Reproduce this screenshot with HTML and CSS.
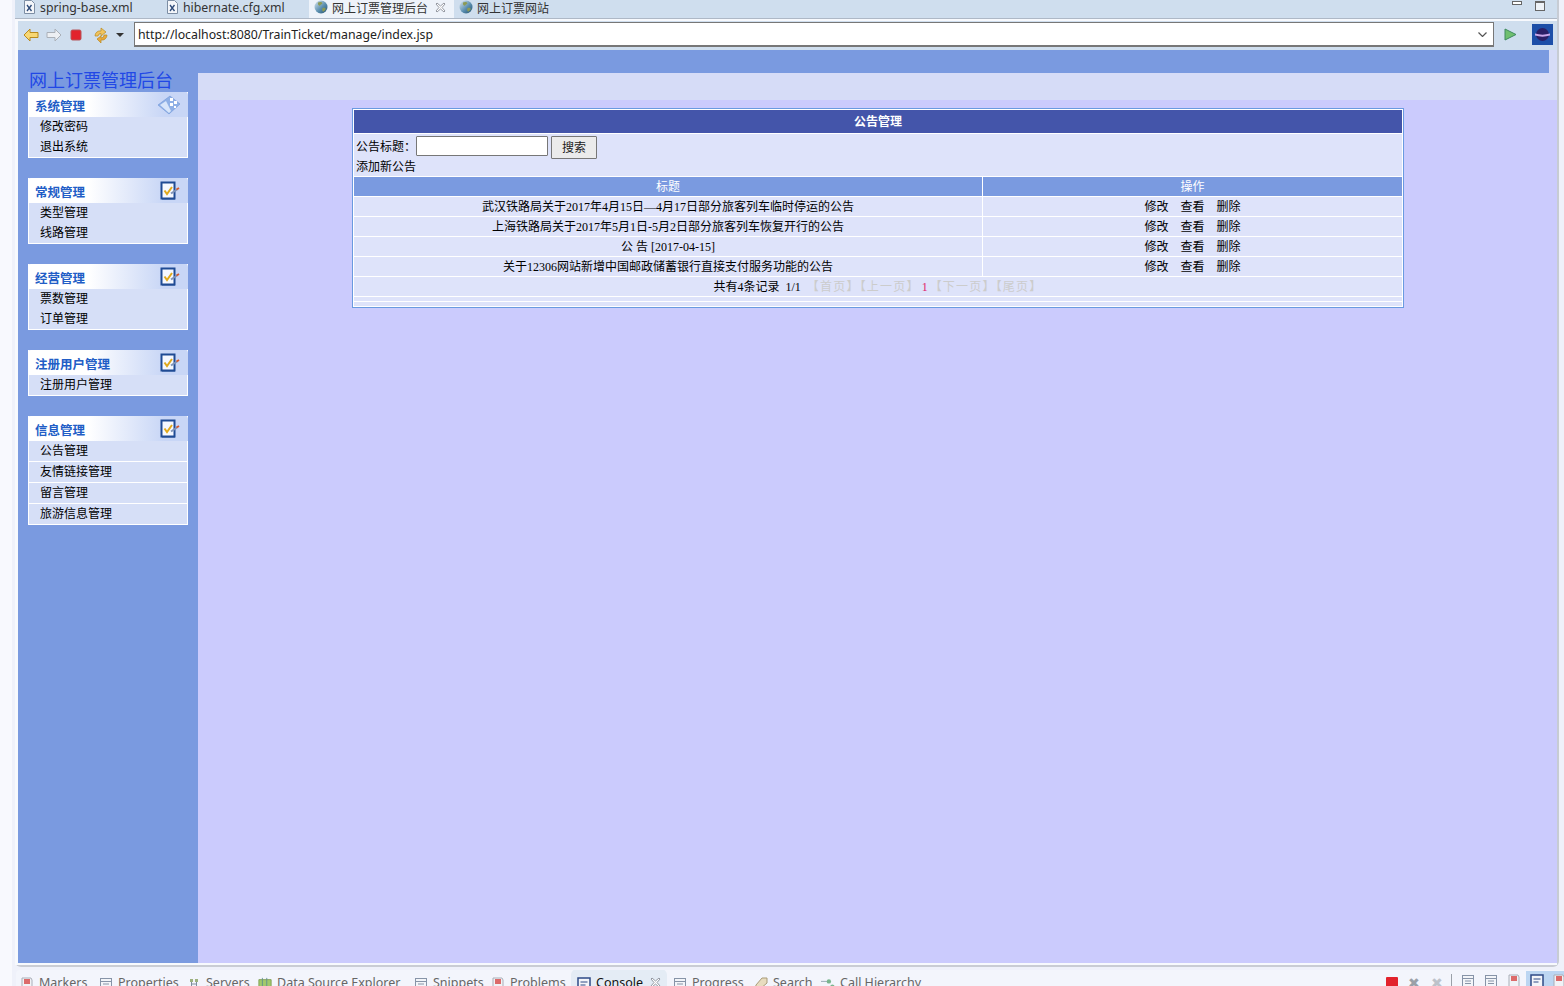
FILE: index.html
```html
<!DOCTYPE html>
<html lang="zh-CN">
<head>
<meta charset="utf-8">
<title>网上订票管理后台</title>
<link rel="stylesheet" href="styles.css">
</head>
<body>
<svg class="defs" width="0" height="0" aria-hidden="true">
  <defs>
    <linearGradient id="g-globe" x1="0" y1="0" x2="1" y2="1"><stop offset="0" stop-color="#dfeaf2"/><stop offset=".55" stop-color="#5b8fb0"/><stop offset="1" stop-color="#22506e"/></linearGradient>
    <symbol id="i-globe" viewBox="0 0 14 14"><circle cx="7" cy="7" r="6.5" fill="url(#g-globe)"/><path d="M4 2.500c2-1 4-.5 4.500.8-.8 1.500-2 1-2.500 2.500-1.500 0-2.500-1.500-2-3.300zM8.500 8c1.500-.5 3 0 3.300 1-.6 1.600-1.800 2.500-3 2.600-.8-1-.8-2.400-.3-3.600z" fill="#8c9a55"/></symbol>
    <symbol id="i-xml" viewBox="0 0 11 14"><path d="M.5.500h7l3 3v10H.500z" fill="#f4f6fa" stroke="#7d8ea4"/><path d="M3 5l4.500 6M7.500 5L3 11" stroke="#2d4a78" stroke-width="1.300" fill="none"/></symbol>
    <symbol id="i-close" viewBox="0 0 11 11"><path d="M1 2l1-1 3.500 3L9 1l1 1-3 3.500 3 3.500-1 1-3.500-3L2 10 1 9l3-3.500z" fill="#fff" stroke="#8a8f99" stroke-width=".9"/></symbol>
    <symbol id="i-task" viewBox="0 0 20 20"><rect x="2" y="2.500" width="13" height="16" fill="#1f4b94"/><rect x="1.500" y="1.500" width="13" height="16" fill="#f5f8ff" stroke="#1f4b94" stroke-width="2"/><path d="M4.500 9.500l2.500 3.500L12 6" fill="none" stroke="#e0a91c" stroke-width="2"/><path d="M11 12.500l6-4" stroke="#7f93b8" stroke-width="2"/><path d="M16.500 8.500l2.500-1.500" stroke="#d3582d" stroke-width="2"/></symbol>
    <symbol id="i-cube" viewBox="0 0 24 20"><path d="M1 10L13 1l10 8-11 10z" fill="#8fb0e6" stroke="#6f95d6" stroke-width=".6"/><path d="M3 10l6-4 5 10-2 2z" fill="#d7e5fa"/><path d="M13 3h3v3h-3zM17 6h3v3h-3zM13 8h3v3h-3zM17 11h2v2h-2z" fill="#fff"/></symbol>
    <symbol id="i-doc" viewBox="0 0 14 14"><rect x="1.500" y="1.500" width="11" height="11" fill="#f3f5f9" stroke="#8794a8"/><path d="M1.500 4.500h11M4 7h6M4 9.500h6" stroke="#8794a8"/></symbol>
    <symbol id="i-console" viewBox="0 0 14 14"><rect x="1" y="1" width="12" height="12" fill="#f3f5f9" stroke="#2e4a86" stroke-width="1.500"/><path d="M3.500 5h7M3.500 8h5" stroke="#2e4a86"/></symbol>
    <symbol id="i-flag" viewBox="0 0 14 14"><path d="M2 1h9l1 2v10H2z" fill="#f1f2f6" stroke="#a9aeb8"/><path d="M4 2h6v5H4z" fill="#dc6a6a"/></symbol>
    <symbol id="i-node" viewBox="0 0 14 14"><path d="M3 2h3v3H3zM8 2h3v3H8zM3 9h3v3H3zM8 9h3v3H8z" fill="#9db17f"/><path d="M4.500 5v4M9.500 5v4M4.500 7h5" stroke="#7e8d9e"/></symbol>
    <symbol id="i-map" viewBox="0 0 16 14"><path d="M1 2h14v11H1z" fill="#a3c96c" stroke="#7d9b4f"/><path d="M5 0v13M10 0v13" stroke="#5f8f8f"/></symbol>
    <symbol id="i-tag" viewBox="0 0 14 14"><path d="M1 13l1-5 6-7h5v5l-7 6z" fill="#e8dcbf" stroke="#a99b79"/></symbol>
    <symbol id="i-flow" viewBox="0 0 16 14"><path d="M0 4h9M4 10h9" stroke="#8ea0ad"/><circle cx="9" cy="4" r="2.500" fill="#79b58e"/><circle cx="13" cy="10" r="2.500" fill="#79b58e"/></symbol>
  </defs>
</svg>

<div class="app">
  <div class="rail"></div>
  <div class="workbench">
    <section class="editor">
      <div class="editor-tabs">
        <div class="etab etab-a"><svg class="ic-xml"><use href="#i-xml"/></svg><span>spring-base.xml</span></div>
        <div class="etab etab-b"><svg class="ic-xml"><use href="#i-xml"/></svg><span>hibernate.cfg.xml</span></div>
        <div class="etab etab-c is-active"><svg class="ic-globe"><use href="#i-globe"/></svg><span class="cjk">网上订票管理后台</span><svg class="ic-close"><use href="#i-close"/></svg></div>
        <div class="etab etab-d"><svg class="ic-globe"><use href="#i-globe"/></svg><span class="cjk">网上订票网站</span></div>
        <div class="win-buttons"><span class="btn-min"></span><span class="btn-max"></span></div>
      </div>
      <div class="browser">
        <div class="toolbar">
          <svg class="tool tool-back" viewBox="0 0 16 14"><path d="M1 7l6-6v3.500h8v5H7V13z" fill="#f7d774" stroke="#b98a1e"/></svg>
          <svg class="tool tool-fwd" viewBox="0 0 16 14"><path d="M15 7L9 1v3.500H1v5h8V13z" fill="#eceff3" stroke="#aab0b8"/></svg>
          <svg class="tool tool-stop" viewBox="0 0 12 12"><rect x="1" y="1" width="10" height="10" rx="1.500" fill="#e2222c" stroke="#b4545a"/></svg>
          <svg class="tool tool-ref" viewBox="0 0 16 16"><path d="M2 9a5 5 0 0 1 6-5V1l5 4-5 4V6.500A3 3 0 0 0 5 9z" fill="#f0c35e" stroke="#b98a1e" stroke-width=".7"/><path d="M14 8a5 5 0 0 1-6 5v3l-4-4 4-3v2a3 3 0 0 0 3-3z" fill="#e9a83c" stroke="#b98a1e" stroke-width=".7"/></svg>
          <svg class="tool tool-drop" viewBox="0 0 8 4"><path d="M0 0h8L4 4z" fill="#333"/></svg>
          <div class="address">
            <span class="address-text">http://localhost:8080/TrainTicket/manage/index.jsp</span>
            <svg class="address-chev" viewBox="0 0 9 5"><path d="M.500.500L4.500 4.500 8.500.500" fill="none" stroke="#555" stroke-width="1.200"/></svg>
          </div>
          <svg class="tool tool-go" viewBox="0 0 13 13"><path d="M1 1l11 5.500L1 12z" fill="#6fbf6f" stroke="#3e8a5e"/></svg>
          <svg class="tool tool-planet" viewBox="0 0 21 21"><rect width="21" height="21" fill="#1d4fa8"/><circle cx="10.500" cy="10.500" r="6.500" fill="#2b1f66"/><path d="M3 9.500c5 1.500 10 1.500 15 0v2c-5 1.500-10 1.500-15 0z" fill="#c9a7ea"/></svg>
        </div>
        <div class="page">
          <div class="page-band"></div>
          <div class="page-body">
            <aside class="sidebar">
              <h1 class="site-title">网上订票管理后台</h1>
              <div class="menu">
                <div class="menu-head"><span>系统管理</span><svg class="ic-cube"><use href="#i-cube"/></svg></div>
                <div class="menu-item">修改密码</div>
                <div class="menu-item">退出系统</div>
              </div>
              <div class="menu">
                <div class="menu-head"><span>常规管理</span><svg class="ic-task"><use href="#i-task"/></svg></div>
                <div class="menu-item">类型管理</div>
                <div class="menu-item">线路管理</div>
              </div>
              <div class="menu">
                <div class="menu-head"><span>经营管理</span><svg class="ic-task"><use href="#i-task"/></svg></div>
                <div class="menu-item">票数管理</div>
                <div class="menu-item">订单管理</div>
              </div>
              <div class="menu">
                <div class="menu-head"><span>注册用户管理</span><svg class="ic-task"><use href="#i-task"/></svg></div>
                <div class="menu-item">注册用户管理</div>
              </div>
              <div class="menu menu-lined">
                <div class="menu-head"><span>信息管理</span><svg class="ic-task"><use href="#i-task"/></svg></div>
                <div class="menu-item">公告管理</div>
                <div class="menu-item">友情链接管理</div>
                <div class="menu-item">留言管理</div>
                <div class="menu-item">旅游信息管理</div>
              </div>
            </aside>
            <main class="main">
              <div class="main-strip"></div>
              <table class="grid">
                <colgroup><col class="col-title"><col class="col-ops"></colgroup>
                <tr><th colspan="2" class="grid-caption">公告管理</th></tr>
                <tr>
                  <td colspan="2" class="grid-search">
                    <div class="search-line">公告标题：<input class="search-input" type="text"><button class="search-btn" type="button">搜索</button></div>
                    <div class="add-line">添加新公告</div>
                  </td>
                </tr>
                <tr class="grid-head"><td>标题</td><td>操作</td></tr>
                <tr><td>武汉铁路局关于2017年4月15日—4月17日部分旅客列车临时停运的公告</td><td class="ops"><span>修改</span><span>查看</span><span>删除</span></td></tr>
                <tr><td>上海铁路局关于2017年5月1日-5月2日部分旅客列车恢复开行的公告</td><td class="ops"><span>修改</span><span>查看</span><span>删除</span></td></tr>
                <tr><td>公 告 [2017-04-15]</td><td class="ops"><span>修改</span><span>查看</span><span>删除</span></td></tr>
                <tr><td>关于12306网站新增中国邮政储蓄银行直接支付服务功能的公告</td><td class="ops"><span>修改</span><span>查看</span><span>删除</span></td></tr>
                <tr><td colspan="2" class="pager">共有4条记录 &nbsp;1/1 &nbsp;<span class="off">【首页】【上一页】</span> &nbsp;<span class="cur">1</span> &nbsp;<span class="off">【下一页】【尾页】</span></td></tr>
                <tr class="grid-spacer"><td colspan="2"></td></tr>
                <tr class="grid-spacer"><td colspan="2"></td></tr>
              </table>
            </main>
          </div>
        </div>
      </div>
    </section>
    <footer class="views">
      <div class="vtab v1"><svg class="vic"><use href="#i-flag"/></svg>Markers</div>
      <div class="vtab v2"><svg class="vic"><use href="#i-doc"/></svg>Properties</div>
      <div class="vtab v3"><svg class="vic"><use href="#i-node"/></svg>Servers</div>
      <div class="vtab v4"><svg class="vic"><use href="#i-map"/></svg>Data Source Explorer</div>
      <div class="vtab v5"><svg class="vic"><use href="#i-doc"/></svg>Snippets</div>
      <div class="vtab v6"><svg class="vic"><use href="#i-flag"/></svg>Problems</div>
      <div class="vtab v7 is-active"><svg class="vic"><use href="#i-console"/></svg>Console<svg class="ic-close"><use href="#i-close"/></svg></div>
      <div class="vtab v8"><svg class="vic"><use href="#i-doc"/></svg>Progress</div>
      <div class="vtab v9"><svg class="vic"><use href="#i-tag"/></svg>Search</div>
      <div class="vtab v10"><svg class="vic"><use href="#i-flow"/></svg>Call Hierarchy</div>
      <div class="view-tools">
        <span class="vt-stop"></span>
        <span class="vt-x">✖</span>
        <span class="vt-x vt-x2">✖</span>
        <span class="vt-sep"></span>
        <svg class="vic"><use href="#i-doc"/></svg>
        <svg class="vic"><use href="#i-doc"/></svg>
        <svg class="vic"><use href="#i-flag"/></svg>
        <span class="vt-on"><svg class="vic"><use href="#i-console"/></svg></span>
        <span class="vt-on vt-on2"><svg class="vic"><use href="#i-flag"/></svg></span>
      </div>
    </footer>
  </div>
</div>
</body>
</html>
```

FILE: styles.css
```css
* { box-sizing: border-box; }
html, body { margin: 0; padding: 0; }
body {
  width: 1564px;
  height: 986px;
  overflow: hidden;
  background: #f6f7fd;
  font-family: "Liberation Serif", "Noto Sans CJK SC", serif;
  font-size: 12px;
  color: #000;
}
.defs { position: absolute; }
.app { display: flex; width: 1564px; height: 986px; }
.rail { width: 12px; flex: none; background: #f8f9fe; }
.workbench { width: 1552px; flex: none; display: flex; flex-direction: column; background: #eff1fa; }

/* editor */
.editor {
  margin-left: 3px;
  width: 1544px;
  height: 967px;
  flex: none;
  display: flex;
  flex-direction: column;
  background: #fff;
  border-right: 2px solid #c7ccd4;
  border-bottom: 2px solid #c9ccd4;
  border-radius: 0 0 6px 6px;
}
.editor-tabs {
  height: 19px;
  flex: none;
  display: flex;
  align-items: center;
  background: #cfdeee;
  border-bottom: 1px solid #aeb8c6;
  font-family: "Noto Sans", sans-serif;
  font-size: 12.3px;
  color: #333;
  white-space: nowrap;
}
.etab { height: 18px; display: flex; align-items: center; flex: none; padding-bottom: 4px; }
.etab-a { width: 143px; padding-left: 9px; gap: 5px; }
.etab-b { width: 151px; padding-left: 9px; gap: 5px; }
.etab-c { width: 145px; padding-left: 5px; gap: 4px; }
.etab-d { width: 120px; padding-left: 5px; gap: 4px; }
.etab.is-active { background: #eef3fa; }
.cjk { font-family: "Noto Sans CJK SC", sans-serif; font-size: 12px; }
.ic-xml { width: 11px; height: 14px; flex: none; }
.ic-globe { width: 14px; height: 14px; flex: none; }
.ic-close { width: 11px; height: 11px; flex: none; margin-left: 3px; }
.win-buttons { margin-left: auto; display: flex; gap: 13px; padding-right: 12px; align-self: flex-start; padding-top: 1px; }
.btn-min { width: 10px; height: 4px; background: #fff; border: 1px solid #666; }
.btn-max { width: 10px; height: 10px; background: #eef2f7; border: 1px solid #666; border-top-width: 2px; }

.browser { flex: 1; min-height: 0; display: flex; flex-direction: column; padding: 2px 0 2px 3px; background: #f7f9fd; }
.toolbar {
  height: 29px;
  flex: none;
  display: flex;
  align-items: center;
  padding-bottom: 2px;
  background: #cfdeee;
  font-family: "Noto Sans", sans-serif;
}
.tool { flex: none; display: block; }
.tool-back { width: 16px; height: 14px; margin-left: 5px; }
.tool-fwd { width: 16px; height: 14px; margin-left: 7px; }
.tool-stop { width: 12px; height: 12px; margin-left: 8px; }
.tool-ref { width: 16px; height: 16px; margin-left: 11px; }
.tool-drop { width: 8px; height: 4px; margin-left: 7px; }
.address {
  width: 1360px;
  height: 25px;
  margin-left: 10px;
  flex: none;
  display: flex;
  align-items: center;
  justify-content: space-between;
  padding: 0 6px 0 3px;
  background: #fff;
  border: 1px solid #777;
  border-width: 1px 1px 2px 1px;
  font-size: 12.3px;
  color: #222;
}
.address-chev { width: 9px; height: 5px; }
.tool-go { width: 13px; height: 13px; margin-left: 10px; }
.tool-planet { width: 21px; height: 21px; margin-left: 15px; }

.page { flex: 1; min-height: 0; display: flex; flex-direction: column; background: #d6dcf7; }
.page-band { height: 23px; flex: none; margin-right: 8px; background: #7a9ae0; }
.page-body { flex: 1; min-height: 0; display: flex; }

/* sidebar */
.sidebar { width: 180px; flex: none; padding: 0 10px; background: #7a9ae0; }
.site-title {
  margin: -3px 0 3px 1px;
  font-family: "Noto Sans CJK SC", sans-serif;
  font-size: 18px;
  line-height: 19px;
  font-weight: 400;
  color: #2148e6;
  white-space: nowrap;
}
.menu { width: 160px; margin-bottom: 20px; background: #d6dff7; border-bottom: 1px solid #fff; border-left: 1px solid #fff; border-right: 1px solid #fff; }
.menu-head {
  height: 25px;
  display: flex;
  align-items: center;
  justify-content: space-between;
  padding: 1px 8px 0 7px;
  margin: 0 -1px;
  background: linear-gradient(90deg, #fff 0, #fff 38%, #c8d6f6 85%, #c8d6f6 100%);
  border-radius: 3px 3px 0 0;
  font-family: "Noto Sans CJK SC", sans-serif;
  font-size: 12.5px;
  font-weight: 700;
  color: #215dc6;
}
.ic-task { width: 20px; height: 20px; margin-top: 0; }
.ic-cube { width: 24px; height: 20px; margin-top: 0; margin-right: -1px; }
.menu-item { height: 20px; line-height: 17px; padding-left: 11px; font-family: "Noto Sans CJK SC", sans-serif; }
.menu-lined .menu-item { height: 21px; line-height: 17px; border-bottom: 1px solid #fff; }
.menu-lined { border-bottom: 0; }

/* main */
.main { flex: 1; min-width: 0; background: #cbcbfd; }
.main-strip { height: 27px; background: #d6dcf7; }
.grid {
  width: 1052px;
  margin: 8px 0 0 154px;
  border: 1px solid #6a9ae0;
  border-collapse: separate;
  border-spacing: 1px;
  background: #fff;
  table-layout: fixed;
}
.col-title { width: 628px; }
.grid td, .grid th { padding: 0; background: #dee3fa; text-align: center; height: 19px; line-height: 18px; font-weight: 400; }
.grid .grid-caption {
  height: 23px;
  padding-bottom: 2px;
  background: #4455aa;
  color: #fff;
  font-family: "Noto Sans CJK SC", sans-serif;
  font-weight: 700;
}
.grid .grid-search { height: 42px; padding: 2px 2px 0; text-align: left; vertical-align: top; }
.search-line { display: flex; align-items: flex-start; height: 24px; line-height: 23px; }
.search-input { width: 132px; height: 20px; margin: 0 3px 0 0; padding: 0; border: 1px solid #777; background: #fff; border-radius: 1px; }
.search-btn { width: 46px; height: 23px; padding: 0; background: #ebebeb; border: 1px solid #777; border-radius: 1px; font: inherit; color: #222; }
.add-line { line-height: 14px; }
.grid .grid-head td { background: #7a9ae0; color: #fff; }
.ops span { margin: 0 6px; }
.off { color: #ccc; letter-spacing: 1.2px; }
.cur { color: #e0206a; margin: 0 -4px; }
.grid .grid-spacer td { height: 4px; line-height: 0; }

/* bottom views */
.views {
  flex: 1;
  min-height: 0;
  margin: 3px 0 0 4px;
  display: flex;
  background: #f3f5fc;
  font-family: "Noto Sans", sans-serif;
  font-size: 12.5px;
  color: #666;
  white-space: nowrap;
  overflow: hidden;
  border-radius: 4px 0 0 0;
}
.vtab { flex: none; display: flex; align-items: flex-start; gap: 5px; padding-left: 4px; line-height: 24px; margin-top: 1px; height: 18px; }
.vtab .vic { margin-top: 6px; }
.vic { width: 14px; height: 14px; flex: none; }
.v1 { width: 79px; }
.v2 { width: 88px; }
.v3 { width: 71px; }
.v4 { width: 156px; }
.v5 { width: 76px; }
.v6 { width: 85px; padding-left: 5px; }
.v7 { width: 96px; padding-left: 6px; margin-top: -1px; background: #e4ecf5; border-radius: 6px 6px 0 0; color: #111; height: 20px; line-height: 28px; }
.v7 .vic { margin-top: 8px; }
.v7 .ic-close { margin: 8px 0 0 2px; }
.v8 { width: 83px; padding-left: 6px; }
.v9 { width: 67px; }
.v10 { width: 110px; }
.view-tools { margin-left: auto; display: flex; align-items: flex-start; gap: 9px; padding-top: 4px; color: #9aa0a8; }
.vt-stop { width: 12px; height: 12px; margin-top: 3px; margin-right: 1px; background: #e2222c; border-radius: 1px; }
.vt-x { font-family: "DejaVu Sans", sans-serif; font-size: 14px; line-height: 18px; width: 14px; }
.vt-x2 { opacity: .6; margin-right: -3px; }
.vt-sep { width: 1px; height: 14px; background: #9aa0a8; }
.vt-on { width: 22px; height: 18px; margin-top: -3px; margin-left: -4px; padding: 3px 4px; background: #bcd6f2; }
.vt-on2 { width: 16px; margin-left: -9px; }
```
